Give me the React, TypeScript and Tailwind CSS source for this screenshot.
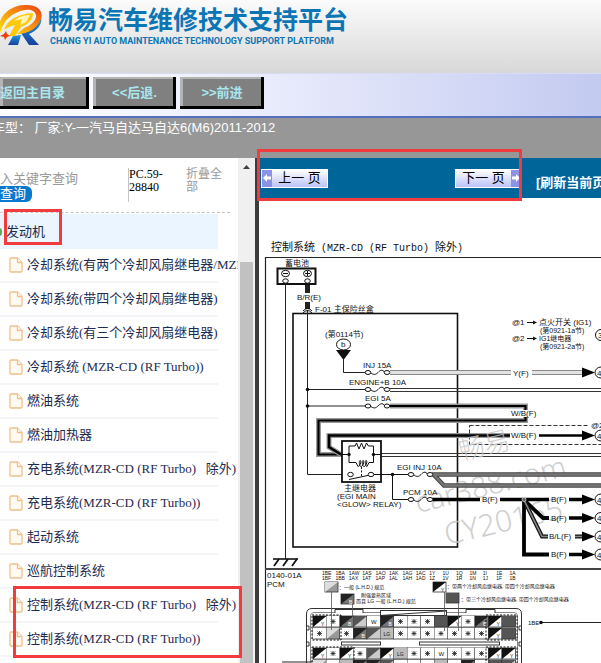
import { useState } from "react";
import type { ReactNode } from "react";
import clsx from "clsx";

type CellKind = "star" | "bw" | "dark" | "gray" | "light" | "solid" | "lg" | "w";

const SYSTEMS = [
  "冷却系统(有两个冷却风扇继电器/MZR-CD)",
  "冷却系统(带四个冷却风扇继电器)",
  "冷却系统(有三个冷却风扇继电器)",
  "冷却系统 (MZR-CD (RF Turbo))",
  "燃油系统",
  "燃油加热器",
  "充电系统(MZR-CD (RF Turbo)\u00a0\u00a0\u00a0除外)",
  "充电系统(MZR-CD (RF Turbo))",
  "起动系统",
  "巡航控制系统",
  "控制系统(MZR-CD (RF Turbo)\u00a0\u00a0\u00a0除外)",
  "控制系统(MZR-CD (RF Turbo))",
];

const PINS_TOP = ["1BE", "1BA", "1AW", "1AS", "1AO", "1AK", "1AG", "1AC", "1Y", "1U", "1Q", "1M", "1I", "1E", "1A"];
const PINS_BOTTOM = ["1BF", "1BB", "1AX", "1AT", "1AP", "1AL", "1AH", "1AD", "1Z", "1V", "1R", "1N", "1J", "1F", "1B"];

const CONNECTOR: { y: number; cells: CellKind[] }[] = [
  { y: 616, cells: ["bw", "star", "dark", "gray", "w", "dark", "star", "star", "star", "solid", "bw", "star", "dark", "bw", "solid"] },
  { y: 628, cells: ["star", "light", "star", "dark", "gray", "lg", "star", "star", "star", "star", "star", "star", "star", "bw", "solid"] },
  { y: 648, cells: ["bw", "star", "bw", "star", "gray", "bw", "lg", "star", "star", "w", "star", "star", "star", "bw", "bw"] },
  { y: 660, cells: ["light", "star", "lg", "dark", "dark", "gray", "star", "star", "star", "lg", "star", "dark", "star", "solid", "gray"] },
];

// ---------------- Logo ----------------
function Logo() {
  return (
    <svg className="h-12 w-11 shrink-0" viewBox="0 0 44 48" aria-hidden="true">
      <defs>
        <linearGradient id="flame" x1="1" y1="0" x2="0" y2="1">
          <stop offset="0" stopColor="#e8400f" />
          <stop offset="0.45" stopColor="#f78b12" />
          <stop offset="1" stopColor="#ffe500" />
        </linearGradient>
        <linearGradient id="leg" x1="0" y1="0" x2="0" y2="1">
          <stop offset="0" stopColor="#1d9be0" />
          <stop offset="1" stopColor="#17409b" />
        </linearGradient>
      </defs>
      <path d="M41 17 C43 25 36 31 29 34 L39 45 L29 45 L21 33 Q38 28 41 17Z" fill="url(#leg)" />
      <path d="M13 36 L21 35 L18 45 L8 45Z" fill="url(#leg)" />
      <path
        d="M1 33 C-6 20 9 5 25 5 C37 4 44 11 41 19 C38 28 28 34 17 34 L24 28 C31 26 37 20 36 15 C34 8 25 9 18 12 C8 16 1 25 1 33Z"
        fill="url(#flame)"
      />
      <path d="M4 30 C7 20 17 14 33 13 C33 19 29 24 21 27 L15 36 L9 36 L15 25 C10 26 7 28 4 30Z" fill="#ffc90a" />
      <path d="M14 21 C18 17 24 15 30 15 L26 22 L20 25 L22 19Z" fill="#fff6b8" />
      <path d="M6 31 L7 34 L10 36 L7 37 L5 40 L4 37 L0 36 L4 34Z" fill="#e8400f" />
    </svg>
  );
}

function FileIcon() {
  return (
    <svg className="h-4 w-3.5 shrink-0" viewBox="0 0 14 16" fill="#fffaf2" stroke="#f0c08a" strokeWidth="1.3" strokeLinejoin="round" aria-hidden="true">
      <path d="M2 1 H8.5 L13 5.5 V14 Q13 15 12 15 H2 Q1 15 1 14 V2 Q1 1 2 1Z" />
      <path d="M8.5 1 V5.5 H13" />
    </svg>
  );
}

// ---------------- Toolbar ----------------
function ToolButton({ className, children }: { className?: string; children: ReactNode }) {
  return (
    <button
      type="button"
      className={clsx(
        "h-8 shrink-0 bg-[#808080] text-[13px] leading-4 font-bold whitespace-nowrap text-[#a9e6ef] shadow-[inset_-3px_-3px_0_#000,inset_3px_2px_0_#b4b4b4]",
        className,
      )}
    >
      {children}
    </button>
  );
}

function PageButton({ dir, children }: { dir: "prev" | "next"; children: ReactNode }) {
  const arrow = (
    <span className="flex h-full w-2.5 shrink-0 items-center justify-center bg-[#8c93e6]">
      <svg className="size-2" viewBox="0 0 8 8" fill="#fff" aria-hidden="true">
        <path d={dir === "prev" ? "M0 4 L4 0 V2.5 H8 V5.5 H4 V8Z" : "M8 4 L4 0 V2.5 H0 V5.5 H4 V8Z"} />
      </svg>
    </span>
  );
  return (
    <button
      type="button"
      className="flex h-[19px] w-[67px] shrink-0 items-center border border-white bg-linear-to-b from-white to-[#bcc2f6] text-[13px] leading-4 text-black"
    >
      {dir === "prev" && arrow}
      <span className="flex-1 text-center whitespace-nowrap">{children}</span>
      {dir === "next" && arrow}
    </button>
  );
}

// ---------------- Wiring diagram parts ----------------
function Fuse({ x, y }: { x: number; y: number }) {
  return (
    <g fill="#fff" stroke="#111" strokeWidth="1">
      <path d={`M${x + 2} ${y} C${x + 6} ${y + 3} ${x + 8} ${y + 2} ${x + 10} ${y} S${x + 14} ${y - 4} ${x + 17} ${y}`} fill="none" />
      <ellipse cx={x} cy={y} rx="2.8" ry="2" />
      <ellipse cx={x + 19} cy={y} rx="2.8" ry="2" />
    </g>
  );
}

function Target({ y, label = "4" }: { y: number; label?: string }) {
  return (
    <g>
      <path d={`M582 ${y - 5} L595 ${y} L582 ${y + 5}Z`} fill="#000" />
      <ellipse cx="601" cy={y} rx="6" ry="5.5" fill="#fff" stroke="#111" />
      <text x="597" y={y + 3}>{label}</text>
    </g>
  );
}

function Swatch({ x, y, w = 13, h = 11, kind }: { x: number; y: number; w?: number; h?: number; kind: CellKind }) {
  const colors: Record<CellKind, [string, string]> = {
    star: ["#fff", "#fff"],
    w: ["#fff", "#fff"],
    bw: ["#111", "#fff"],
    dark: ["#222", "#777"],
    gray: ["#555", "#ccc"],
    light: ["#ddd", "#999"],
    solid: ["#555", "#555"],
    lg: ["#bbb", "#bbb"],
  };
  const [a, b] = colors[kind];
  return (
    <g>
      <rect x={x} y={y} width={w} height={h} fill={b} stroke="#333" strokeWidth="0.8" />
      <path d={`M${x} ${y + h} V${y} H${x + w}Z`} fill={a} />
      {kind === "star" && (
        <path
          d={`M${x + 4.5} ${y + 3.5} l4 4 m0 -4 l-4 4 M${x + 6.5} ${y + 3} v5 M${x + 4} ${y + 5.5} h5`}
          stroke="#222"
          strokeWidth="0.8"
        />
      )}
      {kind === "bw" && <text x={x + 8} y={y + 9.5} fontSize="5">Y</text>}
      {kind === "dark" && <text x={x + 8} y={y + 9.5} fontSize="5" fill="#fff">B</text>}
      {kind === "w" && <text x={x + 4} y={y + 8} fontSize="6">W</text>}
      {kind === "lg" && <text x={x + 3} y={y + 8} fontSize="5">LG</text>}
    </g>
  );
}

function WiringDiagram() {
  return (
    <svg
      className="block h-[420px] w-[480px] max-w-none shrink-0 font-['Liberation_Sans','Noto_Sans_CJK_SC',sans-serif]"
      viewBox="259 254 480 420"
      fontSize="8"
      fill="#111"
      role="img"
      aria-label="控制系统电路图"
    >
      {/* sheet frame and fuse box */}
      <path d="M265.5 674 V257.5 H739" fill="none" stroke="#222" strokeWidth="1.2" />
      <path d="M265 569 H739" stroke="#444" strokeWidth="2" />
      <rect x="293" y="313.5" width="164.5" height="233.5" fill="none" stroke="#111" strokeWidth="1.6" />

      {/* battery */}
      <text x="285" y="266">蓄电池</text>
      <path d="M285.5 283 V559 M307.5 310 V474.5 H348" fill="none" stroke="#222" />
      <rect x="277.5" y="268.5" width="38" height="15.5" fill="#fff" stroke="#111" strokeWidth="2" />
      <g fill="#fff" stroke="#111">
        <ellipse cx="285.5" cy="273.5" rx="4" ry="3.2" />
        <ellipse cx="307.5" cy="273.5" rx="4" ry="3.2" />
        <path d="M283 273.5 h5 M305 273.5 h5 M307.5 271 v5" />
        <ellipse cx="285.5" cy="281" rx="2.8" ry="2.2" />
        <ellipse cx="307.5" cy="281" rx="2.8" ry="2.2" />
      </g>
      <path d="M307.5 285 V293 M307.5 302 V309" stroke="#222" strokeWidth="5" />
      <path d="M303 311 q4.5 -5 9 0 M303 313 q4.5 -5 9 0" fill="none" stroke="#111" />
      <text x="297" y="300">B/R(E)</text>
      <text x="315" y="312">F-01 主保险丝盒</text>

      {/* ground */}
      <path d="M273 559 H298" stroke="#111" strokeWidth="1.6" />
      <path d="M279 559 l-5 7 M288 559 l-5 7 M297 559 l-5 7" stroke="#111" strokeWidth="1.8" />

      {/* reference b */}
      <text x="325" y="337" fontSize="8">(第0114节)</text>
      <ellipse cx="343.5" cy="344.5" rx="7" ry="5.5" fill="#fff" stroke="#111" />
      <text x="341" y="347">b</text>
      <path d="M336 350 H351 L343.5 360Z" />
      <path d="M343.5 359 V372.5 H366 M307.5 389.5 H366 M307.5 406 H366" fill="none" stroke="#222" />
      <circle cx="307.5" cy="389.5" r="1.8" />
      <circle cx="307.5" cy="406" r="1.8" />

      {/* INJ 15A */}
      <path d="M390 372.5 H511 M532 372.5 H583" stroke="#888" strokeWidth="5" />
      <path d="M390 372.5 H511 M532 372.5 H583" stroke="#e2e2e2" strokeWidth="3" />
      <text x="363" y="368">INJ 15A</text>
      <Fuse x={368} y={372.5} />
      <text x="513" y="376">Y(F)</text>
      <Target y={372.5} />

      {/* ENGINE+B 10A */}
      <path d="M390 388.5 H739 M390 391.5 H739" stroke="#333" />
      <text x="349" y="385">ENGINE+B 10A</text>
      <Fuse x={368} y={389.5} />

      {/* EGI 5A and the loops into the main relay */}
      <path d="M390 406 H525.5 V410 M525.5 417 V420.5 H318.5 V454.5 H342" fill="none" stroke="#999" strokeWidth="5" />
      <path d="M390 406 H525.5 V410 M525.5 417 V420.5 H318.5 V454.5 H342" fill="none" stroke="#000" strokeWidth="2.2" />
      <path d="M510 435.5 H329 V447 L341 454.5" fill="none" stroke="#999" strokeWidth="5" />
      <path d="M510 435.5 H329 V447 L341 454.5 M539 435.5 H583" fill="none" stroke="#000" strokeWidth="2.6" />
      <text x="365" y="401">EGI 5A</text>
      <Fuse x={368} y={406} />
      <text x="511" y="416">W/B(F)</text>
      <text x="511" y="438">W/B(F)</text>
      <Target y={435.5} />
      <rect x="469.5" y="425.5" width="270" height="19" fill="none" stroke="#333" strokeDasharray="4 2" />
      <rect x="589" y="420" width="14" height="9" fill="#fff" />
      <text x="591" y="428">@2</text>

      {/* main relay */}
      <path d="M381 453.5 H739 M381 456.5 H739" stroke="#333" />
      <rect x="342" y="441" width="39" height="41" fill="#fff" stroke="#111" strokeWidth="1.8" />
      <g fill="none" stroke="#111">
        <path d="M342 454.5 H349 V446 H355 l1.5 -3 l2.5 6 l2.5 -6 l2.5 6 l2.5 -6 l2 3 H373.5 V462.5 H369 l-2 4 c-2 0 -2 -6 -1 -6 c2 0 0 6 -2 6 c-2 0 -2 -6 -1 -6 c2 0 0 6 -2 6 c-2 0 -2 -6 -1 -6 c2 0 0 6 -2 6 l-2 -4 H349 V454.5 M373.5 454.5 H381" />
        <path d="M361.5 467 V476" strokeDasharray="2 1.5" />
        <path d="M349 479.5 L370 475 M373 474.5 H410 M392.5 474.5 V499.5 H410" />
      </g>
      <circle cx="349" cy="454.5" r="1.7" />
      <circle cx="373.5" cy="454.5" r="1.7" />
      <circle cx="392.5" cy="474.5" r="1.8" />
      <g fill="#fff" stroke="#111">
        <ellipse cx="350.5" cy="474.5" rx="2.8" ry="2.2" />
        <ellipse cx="371" cy="474.5" rx="2.8" ry="2.2" />
      </g>
      <text x="344" y="491">主继电器</text>
      <text x="337" y="499">(EGI MAIN</text>
      <text x="337" y="507">&lt;GLOW&gt; RELAY)</text>

      {/* watermark */}
      <g fill="#c4c4c4" opacity="0.8" fontWeight="300" fontFamily="'Noto Sans','Noto Sans CJK SC',sans-serif">
        <text transform="translate(461 460) rotate(-13)" fontSize="26">畅易</text>
        <text transform="translate(418 513) rotate(-14)" fontSize="29">car388.com</text>
        <text transform="translate(447 545) rotate(-13)" fontSize="30">CY20165</text>
      </g>

      {/* EGI INJ and PCM feeds */}
      <path d="M432 474.5 H739 M434 475 L444 485.5 H739" fill="none" stroke="#444" strokeWidth="4.4" />
      <path d="M432 474.5 H739 M434 475 L444 485.5 H739" fill="none" stroke="#777" strokeWidth="2.4" />
      <path d="M432 499.5 H480 M500 499.5 H549 M569 499.5 H583 M569 518 H583 M569 554.5 H583" stroke="#000" strokeWidth="3.4" />
      <path d="M524 500 L543 518 H549 M524 500 V554.5 H549" fill="none" stroke="#000" strokeWidth="3.8" />
      <path d="M524 500 L542 536.5 H548 M575 536.5 H583" fill="none" stroke="#111" strokeWidth="4" />
      <path d="M524 500 L542 536.5 H548 M575 536.5 H583" fill="none" stroke="#888" strokeWidth="1.6" />
      <circle cx="524" cy="499.5" r="2" fill="#555" stroke="#fff" strokeWidth="0.6" />
      <text x="397" y="470">EGI INJ 10A</text>
      <text x="403" y="495">PCM 10A</text>
      <Fuse x={411} y={474.5} />
      <Fuse x={411} y={499.5} />
      <text x="482" y="502">B(F)</text>
      <text x="551" y="502">B(F)</text>
      <text x="551" y="521">B(F)</text>
      <text x="549" y="539">B/L(F)</text>
      <text x="551" y="557">B(F)</text>
      <Target y={499.5} />
      <Target y={518} />
      <Target y={536.5} />
      <Target y={554.5} />

      {/* ignition switch notes */}
      <text x="512" y="325">@1</text>
      <text x="512" y="341">@2</text>
      <path d="M527 322.5 H534 M527 338.5 H534" stroke="#111" />
      <path d="M533 320.5 l4 2 l-4 2Z M533 336.5 l4 2 l-4 2Z" />
      <text x="539" y="325">点火开关 (IG1)</text>
      <text x="540" y="333" fontSize="7">(第0921-1a节)</text>
      <text x="539" y="341" fontSize="7">IG1继电器</text>
      <text x="540" y="349" fontSize="7">(第0921-2a节)</text>
      <circle cx="601" cy="335" r="5.5" fill="#fff" stroke="#111" />
      <text x="598" y="338">3</text>

      {/* PCM connector header */}
      <text x="267" y="578">0140-01A</text>
      <text x="267" y="587">PCM</text>
      {PINS_TOP.map((pin, i) => (
        <text key={pin} x={322 + i * 13.4} y="575" fontSize="5">{pin}</text>
      ))}
      {PINS_BOTTOM.map((pin, i) => (
        <text key={pin} x={322 + i * 13.4} y="580" fontSize="5">{pin}</text>
      ))}
      <Swatch x={325} y={582} h={10} kind="light" />
      <Swatch x={341} y={594} h={10} kind="dark" />
      <Swatch x={433} y={582} h={10} kind="bw" />
      <Swatch x={446} y={593} h={10} kind="solid" />
      <g fontSize="5">
        <text x="339" y="589">：一般 (L.H.D.) 规范</text>
        <text x="361" y="597">附强要热区域</text>
        <text x="356" y="603">而且 LG 一般 (L.H.D.) 规范</text>
        <text x="447" y="588">：带两个冷却风扇继电器, 带四个冷却风扇继电器</text>
        <text x="461" y="601">：带三个冷却风扇继电器, 带四个冷却风扇继电器</text>
      </g>

      {/* PCM connector body */}
      <g fill="none" stroke="#333">
        <path d="M306.5 674 V614 Q306.5 608.5 312 608.5 H516 Q521.5 608.5 521.5 614 V674" />
        <path d="M310.5 674 V616 Q310.5 612.5 314 612.5 H514 Q517.5 612.5 517.5 616 V674" stroke="#888" />
        <path d="M335 613 V609.5 H363 V613 M466 613 V609.5 H495 V613" fill="#fff" />
        <rect x="380.5" y="610.5" width="66" height="5" fill="#fff" />
        <path d="M380.5 615.5 L446.5 611" />
        <rect x="341.5" y="642" width="39" height="3" />
        <rect x="419.5" y="642" width="80" height="3" />
        <path d="M306 626 h3 v4 h-3 M306 642 h3 v4 h-3 M522 626 h-3 v4 h3 M522 642 h-3 v4 h3" />
      </g>
      {CONNECTOR.map((row) =>
        row.cells.map((kind, i) => <Swatch key={`${row.y}-${i}`} x={313 + i * 13.5} y={row.y} w={13.5} kind={kind} />),
      )}
      <g fill="none" stroke="#111" strokeDasharray="2 1.5">
        <path d="M312 615 H341 V640 H312Z M486 615 H517 V640 H486Z M312 647 H354 V672 H312Z M486 647 H517 V672 H486Z" />
      </g>
      <path d="M331.5 592 V630 M352.5 604 V617 M444.5 592 V631 M458.5 603 V631" stroke="#555" strokeWidth="0.8" />
      <path d="M282 662 H312 M541 622.5 H739" stroke="#222" />
      <circle cx="541" cy="622.5" r="1.8" />
      <text x="528" y="625" fontSize="6">1BE</text>
    </svg>
  );
}

// ---------------- Sidebar ----------------
function Sidebar() {
  const [active, setActive] = useState<number | null>(null);

  return (
    <aside className="flex w-[255px] shrink-0 bg-white font-['Liberation_Serif','Noto_Sans_CJK_SC',serif]">
      <div className="min-w-0 flex-1 overflow-hidden">
        <form className="mr-2 flex h-[55px] border-b border-dashed border-[#c4c4c4] pt-2.5" onSubmit={(e) => e.preventDefault()}>
          <div className="w-32 pt-1">
            <input
              type="text"
              aria-label="关键字查询"
              placeholder="入关键字查询"
              className="block h-3.5 w-full text-[13px] leading-3.5 outline-none placeholder:text-[#9a9a9a]"
            />
            <button type="submit" className="block h-4 w-8 rounded-r-md bg-[#0b78d0] pr-2 text-[13px] leading-4 whitespace-nowrap text-white">
              查询
            </button>
          </div>
          <div className="h-[34px] w-[58px] border-l border-[#c4c4c4] text-[12px] leading-[13px] text-black">
            PC.59-
            <br />
            28840
          </div>
          <button type="button" className="w-9 self-start text-left text-[12px] leading-[13px] text-[#9a9a9a]">
            折叠全部
          </button>
        </form>

        <div className="mt-px mr-5 flex h-[35px] items-center bg-[#ebf5ff]">
          <span className="-ml-1 h-2 w-1.5 rounded-full bg-[#62a868]" />
          <a href="#engine" className="ml-1 text-[13px] leading-4 text-[#1d2b50]">
            发动机
          </a>
        </div>

        <ul className="whitespace-nowrap">
          {SYSTEMS.map((name, i) => (
            <li key={name} className="mr-5 h-[34px] border-b-2 border-[#f4f5f8]">
              <a
                href="#diagram"
                onClick={() => setActive(i)}
                className={clsx("flex h-full items-center gap-1 pl-[9px] text-[13px] leading-4 text-[#1d2b50]", active === i && "underline")}
              >
                <FileIcon />
                {name}
              </a>
            </li>
          ))}
        </ul>
      </div>

      <div className="flex w-[17px] shrink-0 flex-col bg-[#f0f0f0]">
        <svg className="h-[17px] w-[17px]" viewBox="0 0 17 17" fill="#404040" aria-hidden="true">
          <path d="M5 11 L8.5 7 L12 11Z" />
        </svg>
        <div className="mx-0.5 mt-[87px] flex-1 bg-[#c1c1c1]" />
      </div>
    </aside>
  );
}

export default function App() {
  return (
    <div className="flex h-screen flex-col overflow-hidden bg-white font-['Liberation_Sans','Noto_Sans_CJK_SC',sans-serif]">
      <header className="flex h-[73px] shrink-0 bg-linear-to-b from-[#fbfbfb] to-[#d8d8d8]">
        <Logo />
        <div className="pt-1.5 pl-1 whitespace-nowrap text-[#0c75b4]">
          <h1 className="text-[25px] leading-7 font-bold">畅易汽车维修技术支持平台</h1>
          <p className="pt-px pl-0.5 font-['Roboto',sans-serif] text-[9px] leading-3 font-bold">
            CHANG YI AUTO MAINTENANCE TECHNOLOGY SUPPORT PLATFORM
          </p>
        </div>
      </header>

      <nav className="flex h-[45px] shrink-0 gap-1 border-t border-b-2 border-t-[#d5dbf8] border-b-[#5470bc] bg-linear-to-r from-white via-[#e6e9fb] to-[#c3caf0] pt-[3px]">
        <ToolButton className="w-[89px] pr-6">返回主目录</ToolButton>
        <ToolButton className="w-[83px]">&lt;&lt;后退.</ToolButton>
        <ToolButton className="w-[84px]">&gt;&gt;前进</ToolButton>
      </nav>

      <div className="h-10 shrink-0 overflow-hidden bg-[#979797] pt-0.5">
        <p className="-ml-2 text-[13px] leading-4 whitespace-nowrap text-white">
          车型： 厂家:Y-一汽马自达马自达6(M6)2011-2012
        </p>
      </div>

      <div className="relative flex min-h-0 flex-1">
        <Sidebar />

        <main className="min-w-0 flex-1 overflow-hidden border-l-4 border-[#3c3c3c] bg-white">
          <div className="flex h-10 items-center bg-[#006699] pl-0.5 whitespace-nowrap">
            <PageButton dir="prev">上一 页</PageButton>
            <div className="ml-[127px] shrink-0">
              <PageButton dir="next">下一 页</PageButton>
            </div>
            <a href="#refresh" className="ml-3.5 shrink-0 pt-2.5 text-[13px] leading-4 font-bold text-white">
              [刷新当前页]
            </a>
          </div>
          <h2 className="h-14 pt-[43px] pl-3 text-[11px] leading-3 whitespace-nowrap text-[#111]">
            控制系统
            <span className="font-['Liberation_Mono',monospace] text-[10px]"> (MZR-CD (RF Turbo) </span>
            除外
            <span className="font-['Liberation_Mono',monospace] text-[10px]">)</span>
          </h2>
          <WiringDiagram />
        </main>

        {/* callout frames */}
        <div className="pointer-events-none absolute top-[51px] left-1 h-9 w-[58px] border-3 border-[#f03c3e]" />
        <div className="pointer-events-none absolute -top-[9px] left-[257px] h-[52px] w-[265px] border-3 border-[#f03c3e]" />
        <div className="pointer-events-none absolute top-[428px] left-[13px] h-[72px] w-[229px] border-3 border-[#f03c3e]" />
      </div>
    </div>
  );
}
